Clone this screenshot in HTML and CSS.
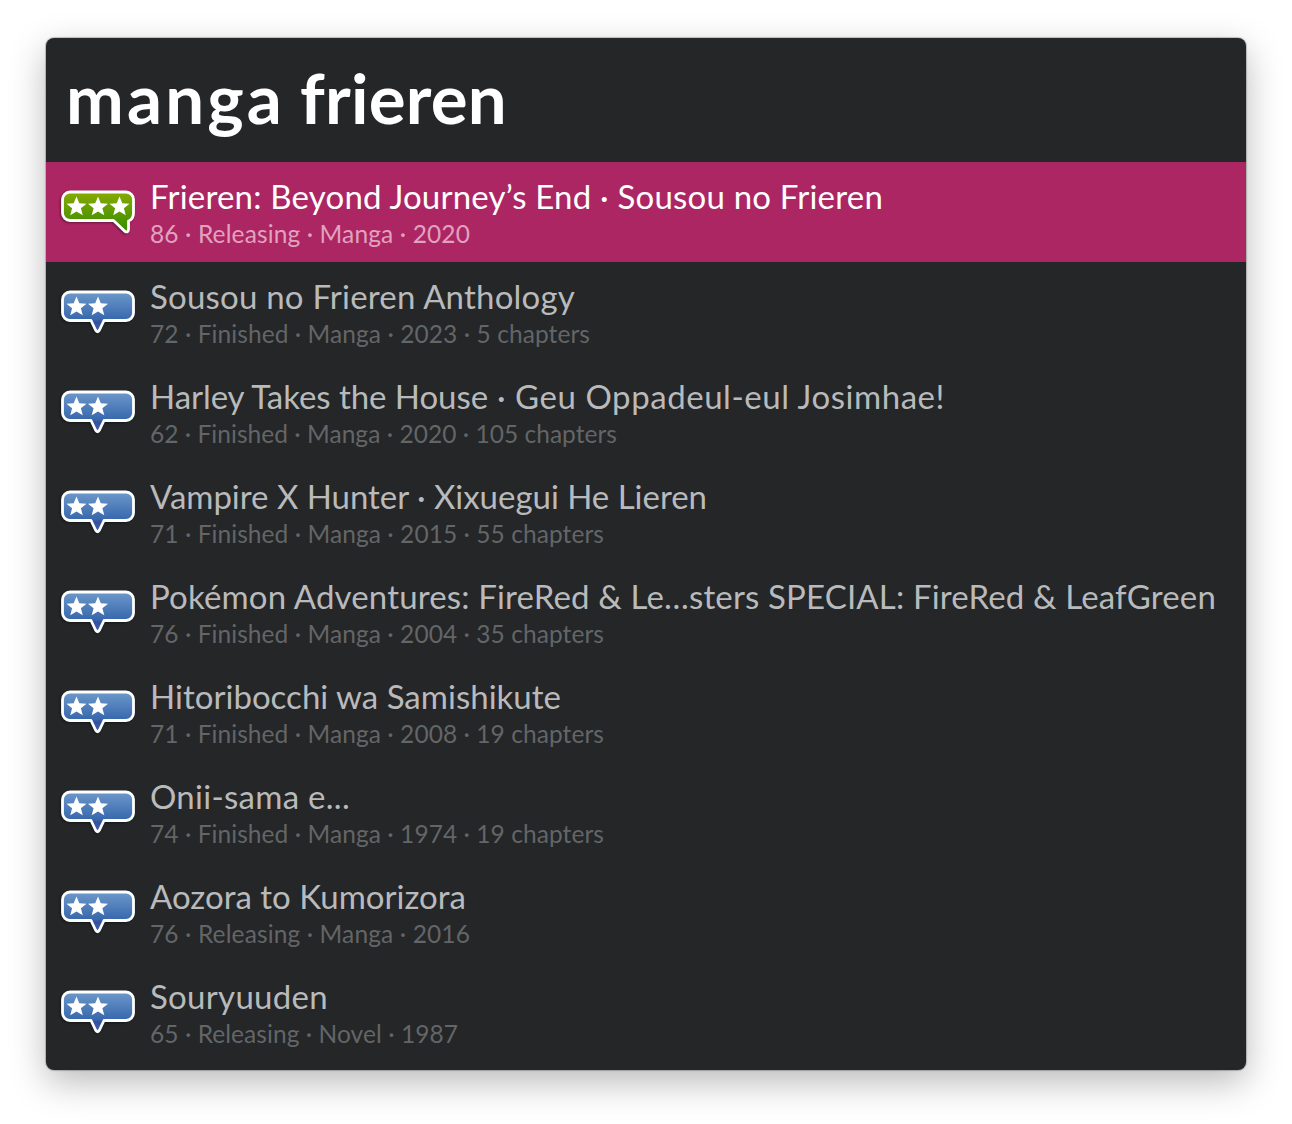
FILE: index.html
```html
<!DOCTYPE html>
<html lang="en">
<head>
<meta charset="utf-8">
<title>manga frieren</title>
<link rel="stylesheet" href="styles.css">
</head>
<body>
<svg class="defs" width="0" height="0">
  <defs>
    <linearGradient id="green" x1="0" y1="0" x2="0" y2="1"><stop offset="0" stop-color="#87aa02"/><stop offset="1" stop-color="#358b00"/></linearGradient>
    <linearGradient id="blue" gradientUnits="userSpaceOnUse" x1="0" y1="12" x2="0" y2="52"><stop offset="0" stop-color="#6d98ca"/><stop offset=".69" stop-color="#3768ad"/><stop offset=".75" stop-color="#354f9f"/><stop offset="1" stop-color="#4563b4"/></linearGradient>
    <path id="star" d="M0-10 2.8-3.3 10-2.8 4.4 1.8 6.3 8.8 0 5-6.3 8.8-4.4 1.8-10-2.8-2.8-3.3Z"/>
    <symbol id="good" viewBox="0 0 100 64">
      <path class="bubble" fill="url(#green)" d="M20 12H76A7.500 7.500 0 0 1 83.500 19.500V33Q83.500 39 78.500 41V49.500Q78 53.500 74.500 51L63.500 40.500H20A7.500 7.500 0 0 1 12.500 33V19.500A7.500 7.500 0 0 1 20 12Z"/>
      <use href="#star" x="26.500" y="26.500" class="star"/><use href="#star" x="48" y="26.500" class="star"/><use href="#star" x="69.500" y="26.500" class="star"/>
    </symbol>
    <symbol id="fair" viewBox="0 0 100 64">
      <path class="bubble" fill="url(#blue)" d="M20 12H76A7.500 7.500 0 0 1 83.500 19.500V33A7.500 7.500 0 0 1 76 40.500H54L49.500 50Q47.500 53.500 45.500 50L41 40.500H20A7.500 7.500 0 0 1 12.500 33V19.500A7.500 7.500 0 0 1 20 12Z"/>
      <use href="#star" x="26.500" y="26.500" class="star"/><use href="#star" x="48" y="26.500" class="star"/>
    </symbol>
  </defs>
</svg>
<main class="panel">
  <h1 class="query"><span data-width="234">manga </span><span data-width="207">frieren</span></h1>
  <ul class="results">
    <li class="result selected"><svg class="icon"><use href="#good"/></svg><div class="text"><div class="title"><span data-width="733">Frieren: Beyond Journey’s End · Sousou no Frieren</span></div><div class="meta"><span data-width="320">86 · Releasing · Manga · 2020</span></div></div></li>
    <li class="result"><svg class="icon"><use href="#fair"/></svg><div class="text"><div class="title"><span data-width="425">Sousou no Frieren Anthology</span></div><div class="meta"><span data-width="440">72 · Finished · Manga · 2023 · 5 chapters</span></div></div></li>
    <li class="result"><svg class="icon"><use href="#fair"/></svg><div class="text"><div class="title"><span data-width="338">Harley Takes the House</span><span data-width="457"> · Geu Oppadeul-eul Josimhae!</span></div><div class="meta"><span data-width="467">62 · Finished · Manga · 2020 · 105 chapters</span></div></div></li>
    <li class="result"><svg class="icon"><use href="#fair"/></svg><div class="text"><div class="title"><span data-width="557">Vampire X Hunter · Xixuegui He Lieren</span></div><div class="meta"><span data-width="454">71 · Finished · Manga · 2015 · 55 chapters</span></div></div></li>
    <li class="result"><svg class="icon"><use href="#fair"/></svg><div class="text"><div class="title"><span data-width="1066">Pokémon Adventures: FireRed &amp; Le…sters SPECIAL: FireRed &amp; LeafGreen</span></div><div class="meta"><span data-width="454">76 · Finished · Manga · 2004 · 35 chapters</span></div></div></li>
    <li class="result"><svg class="icon"><use href="#fair"/></svg><div class="text"><div class="title"><span data-width="411">Hitoribocchi wa Samishikute</span></div><div class="meta"><span data-width="454">71 · Finished · Manga · 2008 · 19 chapters</span></div></div></li>
    <li class="result"><svg class="icon"><use href="#fair"/></svg><div class="text"><div class="title"><span data-width="200">Onii-sama e...</span></div><div class="meta"><span data-width="454">74 · Finished · Manga · 1974 · 19 chapters</span></div></div></li>
    <li class="result"><svg class="icon"><use href="#fair"/></svg><div class="text"><div class="title"><span data-width="316">Aozora to Kumorizora</span></div><div class="meta"><span data-width="320">76 · Releasing · Manga · 2016</span></div></div></li>
    <li class="result"><svg class="icon"><use href="#fair"/></svg><div class="text"><div class="title"><span data-width="178">Souryuuden</span></div><div class="meta"><span data-width="308">65 · Releasing · Novel · 1987</span></div></div></li>
  </ul>
</main>
<script src="script.js"></script>
</body>
</html>
```
FILE: styles.css
```css
body {
  box-sizing: border-box;
  min-height: 1124px;
  margin: 0;
  padding: 38px 46px 0;
  background: #fff;
  font-family: Lato, "Liberation Sans", sans-serif;
}
.defs { display: block; }
.panel {
  width: 1200px;
  height: 1032px;
  overflow: hidden;
  border-radius: 8px;
  background: #242628;
  box-shadow: 0 0 1px 1px rgba(0, 0, 0, .22), 0 12px 36px rgba(0, 0, 0, .28);
}
.query {
  margin: 0;
  height: 124px;
  padding-left: 20px;
  color: #fff;
  font-size: 69px;
  font-weight: 700;
  line-height: 119px;
  white-space: pre;
  word-spacing: -5px;
}
.results {
  margin: 0;
  padding: 0;
  list-style: none;
}
.result {
  display: flex;
  height: 100px;
  color: #b9babb;
}
.selected {
  background: #ac2663;
  color: #fff;
}
.icon {
  flex: none;
  width: 100px;
  height: 64px;
  margin: 18px 0 0 4px;
}
.bubble {
  stroke: #fff;
  stroke-width: 2.800px;
  stroke-linejoin: round;
  filter: drop-shadow(-1px 1.500px 1px rgba(0, 0, 0, .4));
}
.star { fill: #fff; }
.text {
  padding-top: 14px;
  white-space: pre;
}
.title {
  font-size: 33px;
  line-height: 40px;
}
.meta {
  color: #636567;
  font-size: 24.500px;
  line-height: 36px;
}
.selected .meta { color: #e1a2bf; }
```
FILE: script.js
```js
// Tracks each line so it fills its declared width.
document.fonts.ready.then(() => {
  document.querySelectorAll('[data-width]').forEach((line) => {
    const spare = Number(line.dataset.width) - line.getBoundingClientRect().width;
    line.style.letterSpacing = spare / line.textContent.length + 'px';
  });
});
```
